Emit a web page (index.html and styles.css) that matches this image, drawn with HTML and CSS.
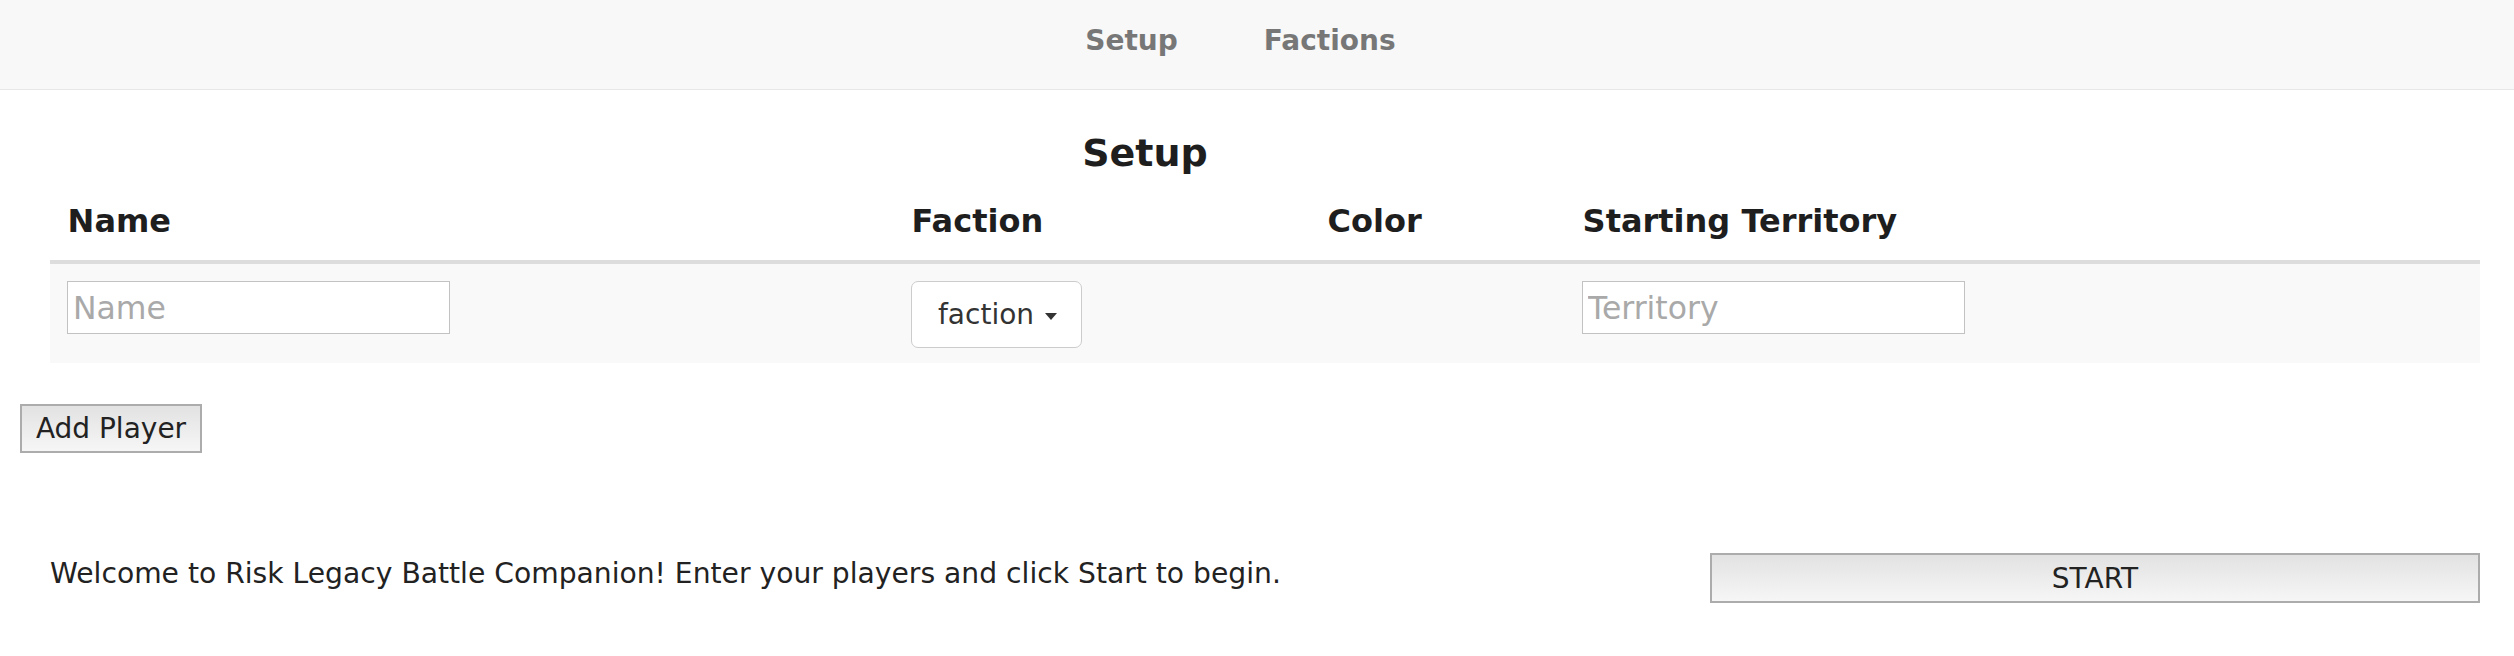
FILE: index.html
```html
<!DOCTYPE html>
<html lang="en">
<head>
<meta charset="utf-8">
<title>Risk Legacy Battle Companion</title>
<link rel="stylesheet" href="styles.css">
</head>
<body>
<nav class="navbar">
  <ul class="nav-links">
    <li><a class="nav-link" href="#setup">Setup</a></li>
    <li><a class="nav-link" href="#factions">Factions</a></li>
  </ul>
</nav>
<main class="page">
  <h2 class="page-title">Setup</h2>
  <table class="players">
    <colgroup>
      <col class="col-name">
      <col class="col-faction">
      <col class="col-color">
      <col class="col-territory">
    </colgroup>
    <thead>
      <tr><th>Name</th><th>Faction</th><th>Color</th><th>Starting Territory</th></tr>
    </thead>
    <tbody>
      <tr>
        <td><input class="text-input" type="text" placeholder="Name"></td>
        <td><button class="dropdown-btn" type="button">faction<span class="caret"></span></button></td>
        <td></td>
        <td><input class="text-input" type="text" placeholder="Territory"></td>
      </tr>
    </tbody>
  </table>
  <button class="btn add-btn" type="button">Add Player</button>
  <div class="footer-row">
    <p class="welcome">Welcome to Risk Legacy Battle Companion! Enter your players and click Start to begin.</p>
    <button class="btn start-btn" type="button">START</button>
  </div>
</main>
</body>
</html>
```
FILE: styles.css
```css
html, body {
  margin: 0;
  padding: 0;
  background: #ffffff;
}

body {
  font-family: "DejaVu Sans", Verdana, sans-serif;
  color: #222222;
}

.navbar {
  height: 89px;
  background: #f8f8f8;
  border-bottom: 1px solid #e7e7e7;
}

.nav-links {
  list-style: none;
  margin: 0;
  padding: 0 33px 0 0;
  display: flex;
  justify-content: center;
}

.nav-link {
  display: block;
  padding: 25px 43px 0;
  line-height: 32px;
  font-size: 28px;
  font-weight: bold;
  color: #777777;
  text-decoration: none;
}

.page {
  padding: 0 0 0 20px;
}

.page-title {
  margin: 41px 0 14px;
  padding-right: 244px;
  text-align: center;
  font-size: 38px;
  line-height: 44px;
  font-weight: bold;
  color: #1e1e1e;
}

.players {
  margin-left: 30px;
  width: 2430px;
  border-collapse: collapse;
  table-layout: fixed;
}

.col-name { width: 844px; }
.col-faction { width: 416px; }
.col-color { width: 255px; }
.col-territory { width: 915px; }

.players th {
  text-align: left;
  vertical-align: bottom;
  padding: 14px 17.6px 21px;
  font-size: 32px;
  line-height: 36px;
  font-weight: bold;
  color: #1e1e1e;
  border-bottom: 4px solid #dddddd;
}

.players td {
  vertical-align: top;
  padding: 17px 17.6px 15px 17px;
  background: #f9f9f9;
}

.text-input {
  display: block;
  box-sizing: border-box;
  width: 383px;
  height: 53px;
  margin: 0;
  padding: 0 5px;
  border: 1px solid #c2c2c2;
  background: #ffffff;
  font-family: "DejaVu Sans", Verdana, sans-serif;
  font-size: 31.5px;
  color: #222222;
}

.text-input::placeholder {
  color: #a9a9a9;
}

.dropdown-btn {
  display: block;
  box-sizing: border-box;
  width: fit-content;
  height: 67px;
  margin: 0;
  padding: 0 24px 0 26px;
  border: 1.5px solid #cccccc;
  border-radius: 7px;
  background: #ffffff;
  font-family: "DejaVu Sans", Verdana, sans-serif;
  font-size: 28px;
  color: #333333;
}

.caret {
  display: inline-block;
  width: 0;
  height: 0;
  margin-left: 11px;
  vertical-align: middle;
  border-top: 7px solid #333333;
  border-left: 6px solid transparent;
  border-right: 6px solid transparent;
}

.btn {
  display: block;
  box-sizing: border-box;
  margin: 0;
  padding: 0;
  border: 2px solid #acacac;
  background: linear-gradient(to bottom, #e2e2e2, #f6f6f6);
  font-family: "DejaVu Sans", Verdana, sans-serif;
  font-size: 28px;
  color: #222222;
  text-align: center;
}

.add-btn {
  margin-top: 41px;
  width: 182px;
  height: 49px;
}

.footer-row {
  margin: 100px 0 0 30px;
  width: 2430px;
  display: flex;
  justify-content: space-between;
  align-items: center;
}

.welcome {
  margin: 0 0 8px;
  font-size: 28.2px;
  line-height: 34px;
  color: #222222;
}

.start-btn {
  width: 770px;
  height: 50px;
}
```
